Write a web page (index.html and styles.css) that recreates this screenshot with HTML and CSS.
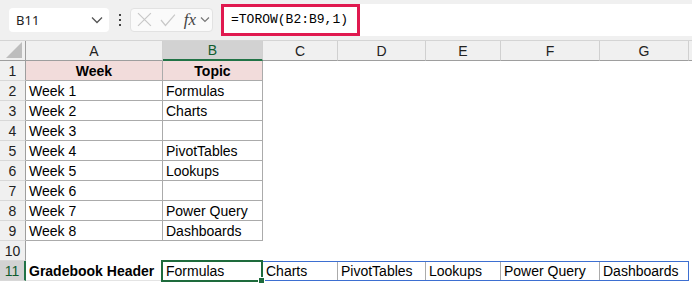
FILE: index.html
```html
<html>
  <head>
    <meta charset="utf-8" />
    <title>TOROW</title>
    <link rel="stylesheet" href="styles.css">
  </head>
  <body>
    <header class="toolbar">
      <div class="namebox">
        <span>B11</span>
        <svg class="chev" width="12" height="8" viewBox="0 0 12 8"><path d="M1 1.5 L6 6.5 L11 1.5" fill="none" stroke="#555" stroke-width="1.3"/></svg>
      </div>
      <div class="dots"><i></i><i></i><i></i></div>
      <div class="fxbox">
        <svg width="15" height="15" viewBox="0 0 15 15"><path d="M1 1 L14 14 M14 1 L1 14" stroke="#c8c8c8" stroke-width="1.2"/></svg>
        <svg width="16" height="14" viewBox="0 0 16 14"><path d="M1 7 L5.5 12.5 L15 1.5" fill="none" stroke="#c8c8c8" stroke-width="1.2"/></svg>
        <span class="fx">fx</span>
        <svg width="10" height="7" viewBox="0 0 10 7"><path d="M1 1.5 L5 5.5 L9 1.5" fill="none" stroke="#777" stroke-width="1.2"/></svg>
      </div>
      <div class="formula">
        <div class="highlight">=TOROW(B2:B9,1)</div>
      </div>
    </header>

    <main class="sheet">
      <div class="corner"><svg width="18" height="18" viewBox="0 0 18 18"><path d="M17 1 L17 17 L1 17 Z" fill="#bdbdbd"/></svg></div>
      <div class="colhead">A</div>
      <div class="colhead active">B</div>
      <div class="colhead">C</div>
      <div class="colhead">D</div>
      <div class="colhead">E</div>
      <div class="colhead">F</div>
      <div class="colhead">G</div>
      <div class="colhead last"></div>

      <div class="rowhead">1</div>
      <div class="cell tbl head">Week</div>
      <div class="cell tbl head">Topic</div>
      <div class="cell span"></div>

      <div class="rowhead">2</div>
      <div class="cell tbl">Week 1</div>
      <div class="cell tbl">Formulas</div>
      <div class="cell span"></div>

      <div class="rowhead">3</div>
      <div class="cell tbl">Week 2</div>
      <div class="cell tbl">Charts</div>
      <div class="cell span"></div>

      <div class="rowhead">4</div>
      <div class="cell tbl">Week 3</div>
      <div class="cell tbl"></div>
      <div class="cell span"></div>

      <div class="rowhead">5</div>
      <div class="cell tbl">Week 4</div>
      <div class="cell tbl">PivotTables</div>
      <div class="cell span"></div>

      <div class="rowhead">6</div>
      <div class="cell tbl">Week 5</div>
      <div class="cell tbl">Lookups</div>
      <div class="cell span"></div>

      <div class="rowhead">7</div>
      <div class="cell tbl">Week 6</div>
      <div class="cell tbl"></div>
      <div class="cell span"></div>

      <div class="rowhead">8</div>
      <div class="cell tbl">Week 7</div>
      <div class="cell tbl">Power Query</div>
      <div class="cell span"></div>

      <div class="rowhead">9</div>
      <div class="cell tbl">Week 8</div>
      <div class="cell tbl">Dashboards</div>
      <div class="cell span"></div>

      <div class="rowhead">10</div>
      <div class="cell full"></div>

      <div class="rowhead active">11</div>
      <div class="cell bold">Gradebook Header</div>
      <div class="cell selected">Formulas<span class="handle"></span></div>
      <div class="spill">
        <div class="cell">Charts</div>
        <div class="cell">PivotTables</div>
        <div class="cell">Lookups</div>
        <div class="cell">Power Query</div>
        <div class="cell">Dashboards</div>
      </div>
      <div class="cell"></div>
    </main>
  </body>
</html>
```

FILE: styles.css
```css
html, body {
  margin: 0;
  height: 100%;
  overflow: hidden;
}

body {
  background: #ffffff;
  font-family: "Liberation Sans", Arial, sans-serif;
  font-size: 14px;
  color: #000000;
}

/* formula bar */
.toolbar {
  height: 41px;
  box-sizing: border-box;
  padding: 4px 0 5px 9px;
  display: flex;
  align-items: center;
  background: #f0f0f0;
  border-bottom: 1px solid #d4d4d4;
}

.namebox {
  width: 100px;
  height: 24px;
  box-sizing: border-box;
  padding: 0 6px 0 7px;
  display: flex;
  align-items: center;
  justify-content: space-between;
  background: #ffffff;
  border-radius: 4px;
  font-family: "Noto Sans", sans-serif;
  font-size: 13px;
  color: #222;
}

.dots {
  width: 21px;
  display: flex;
  flex-direction: column;
  align-items: center;
  gap: 3px;
}
.dots i {
  width: 2px;
  height: 2px;
  background: #444;
}

.fxbox {
  width: 83px;
  height: 24px;
  box-sizing: border-box;
  padding: 0 2px 0 6px;
  display: flex;
  align-items: center;
  gap: 8px;
  background: #fafafa;
  border: 1px solid #e2e2e2;
  border-radius: 4px;
}
.fx {
  margin-right: -4px;
  font-family: "Liberation Serif", serif;
  font-style: italic;
  font-size: 17px;
  color: #444;
}

.formula {
  flex: 1;
  height: 32px;
  margin-left: 8px;
  background: #ffffff;
  display: flex;
  align-items: center;
}
.highlight {
  height: 32px;
  width: 139px;
  box-sizing: border-box;
  padding: 0 0 0 7px;
  display: flex;
  align-items: center;
  border: 3px solid #e0194f;
  font-family: "Liberation Mono", monospace;
  font-size: 13px;
  color: #000;
}

/* grid */
.sheet {
  display: grid;
  grid-template-columns: 26px 137px 100px 75px 88px 75px 99px 89px 1fr;
  grid-auto-rows: 20px;
}

.corner, .colhead, .rowhead {
  background: #f0f0f0;
  color: #222;
  box-sizing: border-box;
}

.corner {
  border-right: 1px solid #9e9e9e;
  border-bottom: 1px solid #9e9e9e;
  display: flex;
  align-items: flex-end;
  justify-content: flex-end;
  padding: 0 2px 1px 0;
}

.colhead {
  border-right: 1px solid #d0d0d0;
  border-bottom: 1px solid #9e9e9e;
  display: flex;
  align-items: center;
  justify-content: center;
}
.colhead.active {
  background: #d2d2d2;
  color: #0f5c2e;
  border-bottom: 2px solid #217346;
}
.colhead.last {
  border-right: none;
}

.rowhead {
  border-right: 1px solid #9e9e9e;
  border-bottom: 1px solid #d8d8d8;
  display: flex;
  align-items: center;
  justify-content: center;
}
.rowhead.active {
  background: #d2d2d2;
  color: #0f5c2e;
  border-right: 2px solid #217346;
}

.cell {
  box-sizing: border-box;
  padding: 0 3px;
  display: flex;
  align-items: center;
  white-space: nowrap;
  overflow: hidden;
}
.cell.tbl {
  border-right: 1px solid #ababab;
  border-bottom: 1px solid #ababab;
}
.cell.head {
  background: #f2dcdb;
  font-weight: bold;
  justify-content: center;
}
.cell.span {
  grid-column: span 6;
}
.cell.full {
  grid-column: span 8;
}
.cell.bold {
  font-weight: bold;
  border-bottom: 1px solid #e4e4e4;
}

.cell.selected {
  position: relative;
  overflow: visible;
  margin: -1px 0 -1px -2px;
  padding-left: 3px;
  border: 2px solid #1e6b3c;
  z-index: 1;
}
.handle {
  position: absolute;
  right: -4px;
  bottom: -4px;
  width: 5px;
  height: 5px;
  background: #1e6b3c;
  border: 1px solid #ffffff;
}

.spill {
  grid-column: span 5;
  display: grid;
  grid-template-columns: 75px 88px 75px 99px 89px;
  box-sizing: border-box;
  border: 1px solid #3d6fd1;
  margin-left: -1px;
}
.spill .cell {
  border-right: 1px solid #ababab;
}
.spill .cell:last-child {
  border-right: none;
}
```
